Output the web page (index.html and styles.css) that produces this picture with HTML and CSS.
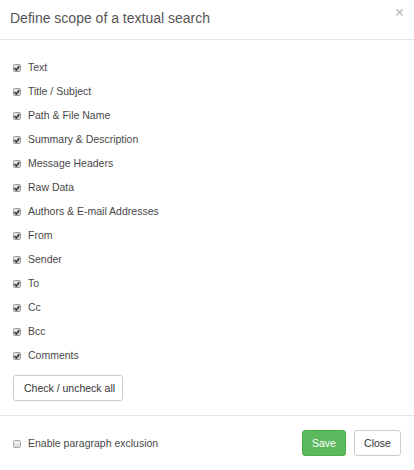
FILE: index.html
```html
<!DOCTYPE html>
<html>
<head>
<meta charset="utf-8">
<link rel="stylesheet" href="styles.css">
</head>
<body>
<div class="modal">
  <div class="modal-header">
    <h4 class="modal-title">Define scope of a textual search</h4>
    <span class="close"><svg viewBox="0 0 7 7" width="7" height="7"><path d="M0.5 0.5 L6.5 6.5 M6.5 0.5 L0.5 6.5" stroke="#c4c4c4" stroke-width="1.6"/></svg></span>
  </div>
  <div class="modal-body">
    <ul class="fields">
      <li class="field"><span class="cb checked"><svg viewBox="0 0 8 8"><path d="M1.6 4.2 L3.3 5.9 L6.4 2" fill="none" stroke="#2a2a2a" stroke-width="1.4"/></svg></span><span>Text</span></li>
      <li class="field"><span class="cb checked"><svg viewBox="0 0 8 8"><path d="M1.6 4.2 L3.3 5.9 L6.4 2" fill="none" stroke="#2a2a2a" stroke-width="1.4"/></svg></span><span>Title / Subject</span></li>
      <li class="field"><span class="cb checked"><svg viewBox="0 0 8 8"><path d="M1.6 4.2 L3.3 5.9 L6.4 2" fill="none" stroke="#2a2a2a" stroke-width="1.4"/></svg></span><span>Path &amp; File Name</span></li>
      <li class="field"><span class="cb checked"><svg viewBox="0 0 8 8"><path d="M1.6 4.2 L3.3 5.9 L6.4 2" fill="none" stroke="#2a2a2a" stroke-width="1.4"/></svg></span><span>Summary &amp; Description</span></li>
      <li class="field"><span class="cb checked"><svg viewBox="0 0 8 8"><path d="M1.6 4.2 L3.3 5.9 L6.4 2" fill="none" stroke="#2a2a2a" stroke-width="1.4"/></svg></span><span>Message Headers</span></li>
      <li class="field"><span class="cb checked"><svg viewBox="0 0 8 8"><path d="M1.6 4.2 L3.3 5.9 L6.4 2" fill="none" stroke="#2a2a2a" stroke-width="1.4"/></svg></span><span>Raw Data</span></li>
      <li class="field"><span class="cb checked"><svg viewBox="0 0 8 8"><path d="M1.6 4.2 L3.3 5.9 L6.4 2" fill="none" stroke="#2a2a2a" stroke-width="1.4"/></svg></span><span>Authors &amp; E-mail Addresses</span></li>
      <li class="field"><span class="cb checked"><svg viewBox="0 0 8 8"><path d="M1.6 4.2 L3.3 5.9 L6.4 2" fill="none" stroke="#2a2a2a" stroke-width="1.4"/></svg></span><span>From</span></li>
      <li class="field"><span class="cb checked"><svg viewBox="0 0 8 8"><path d="M1.6 4.2 L3.3 5.9 L6.4 2" fill="none" stroke="#2a2a2a" stroke-width="1.4"/></svg></span><span>Sender</span></li>
      <li class="field"><span class="cb checked"><svg viewBox="0 0 8 8"><path d="M1.6 4.2 L3.3 5.9 L6.4 2" fill="none" stroke="#2a2a2a" stroke-width="1.4"/></svg></span><span>To</span></li>
      <li class="field"><span class="cb checked"><svg viewBox="0 0 8 8"><path d="M1.6 4.2 L3.3 5.9 L6.4 2" fill="none" stroke="#2a2a2a" stroke-width="1.4"/></svg></span><span>Cc</span></li>
      <li class="field"><span class="cb checked"><svg viewBox="0 0 8 8"><path d="M1.6 4.2 L3.3 5.9 L6.4 2" fill="none" stroke="#2a2a2a" stroke-width="1.4"/></svg></span><span>Bcc</span></li>
      <li class="field"><span class="cb checked"><svg viewBox="0 0 8 8"><path d="M1.6 4.2 L3.3 5.9 L6.4 2" fill="none" stroke="#2a2a2a" stroke-width="1.4"/></svg></span><span>Comments</span></li>
    </ul>
    <button class="btn btn-default toggle-all">Check / uncheck all</button>
  </div>
  <div class="modal-footer">
    <label class="field exclusion"><span class="cb"></span><span>Enable paragraph exclusion</span></label>
    <div class="actions">
      <button class="btn btn-success">Save</button>
      <button class="btn btn-default">Close</button>
    </div>
  </div>
</div>
</body>
</html>
```
FILE: styles.css
```css
* { box-sizing: border-box; }
html, body { margin: 0; padding: 0; background: #fff; }
body {
  font-family: "Liberation Sans", Arial, sans-serif;
  font-size: 10.5px;
  color: #484848;
  width: 414px;
  height: 470px;
  overflow: hidden;
}
.modal { display: flex; flex-direction: column; height: 470px; }
.modal-header {
  position: relative;
  height: 40px;
  padding: 8px 13px 0 10px;
  border-bottom: 1px solid #e5e5e5;
}
.modal-title {
  margin: 0;
  font-size: 14px;
  font-weight: normal;
  color: #555;
  line-height: 20px;
}
.close {
  position: absolute;
  top: 9px;
  right: 11px;
  width: 7px;
  height: 7px;
  display: block;
}
.close svg { display: block; }
.modal-body { padding: 15px 13px 14px; border-bottom: 1px solid #e5e5e5; }
.fields { list-style: none; margin: 0; padding: 0; }
.field {
  display: flex;
  align-items: center;
  height: 24px;
  gap: 7px;
}
.cb {
  width: 8px;
  height: 8px;
  border: 1px solid #a8a8a8;
  border-radius: 1.5px;
  background: linear-gradient(#f2f2f2, #d8d8d8);
  display: block;
  flex: none;
  position: relative;
  top: 0.5px;
}
.cb.checked {
  border-color: #9a9a9a;
  background: linear-gradient(#e2e2e2, #c9c9c9);
}
.cb svg {
  position: absolute;
  left: -1px;
  top: -1px;
  width: 8px;
  height: 8px;
  display: block;
}
.btn {
  font-family: "Liberation Sans", Arial, sans-serif;
  font-size: 10.5px;
  height: 26px;
  padding: 0 10px;
  border-radius: 3px;
  border: 1px solid #ccc;
  background: #fff;
  color: #333;
  white-space: nowrap;
  cursor: pointer;
}
.toggle-all { margin-top: 8px; width: 110px; display: block; }
.modal-footer {
  padding: 14px 13px 0 13px;
  display: flex;
  align-items: flex-start;
  justify-content: space-between;
}
.exclusion { height: 26px; }
.actions { display: flex; gap: 8px; }
.btn-success { background: #5cb85c; border-color: #4cae4c; color: #fff; width: 44px; padding: 0; }
.actions .btn-default { width: 47px; padding: 0; }
```
